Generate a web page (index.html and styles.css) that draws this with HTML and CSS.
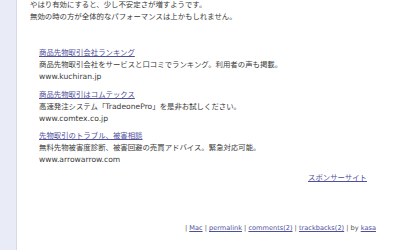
FILE: index.html
```html
<!DOCTYPE html>
<html lang="ja">
<head>
<meta charset="utf-8">
<link rel="stylesheet" href="styles.css">
</head>
<body>
<div class="side"></div>
<main class="main">
  <p class="intro">やはり有効にすると、少し不安定さが増すようです。<br>無効の時の方が全体的なパフォーマンスは上かもしれません。</p>
  <div class="ads">
    <div class="ad">
      <a href="#" class="ad-title">商品先物取引会社ランキング</a>
      <div>商品先物取引会社をサービスと口コミでランキング。利用者の声も掲載。</div>
      <div class="lat">www.kuchiran.jp</div>
    </div>
    <div class="ad">
      <a href="#" class="ad-title">商品先物取引はコムテックス</a>
      <div>高速発注システム「<span class="lat">TradeonePro</span>」を是非お試しください。</div>
      <div class="lat">www.comtex.co.jp</div>
    </div>
    <div class="ad">
      <a href="#" class="ad-title">先物取引のトラブル、被害相談</a>
      <div>無料先物被害度診断、被害回避の売買アドバイス。緊急対応可能。</div>
      <div class="lat">www.arrowarrow.com</div>
    </div>
    <div class="sponsor"><a href="#">スポンサーサイト</a></div>
  </div>
  <div class="footer">| <a href="#">Mac</a> | <a href="#">permalink</a> | <a href="#">comments(2)</a> | <a href="#">trackbacks(2)</a> | by <a href="#">kasa</a></div>
</main>
</body>
</html>
```
FILE: styles.css
```css
html, body {
  margin: 0;
  height: 100%;
  background: #fff;
}
body {
  display: flex;
  font-family: "DejaVu Sans", "Noto Sans CJK JP", sans-serif;
  font-size: 7.4px;
  line-height: 12px;
  color: #3a3a3a;
  overflow: hidden;
}
.side {
  width: 16px;
  flex: none;
  background: #e9ebf6;
  border-right: 1px solid #d6dbeb;
}
.main {
  flex: 1;
  padding: 0 24px 0 13px;
}
.intro {
  margin: -1px 0 0;
}
.ads {
  margin: 24px 0 0 9px;
  display: flex;
  flex-direction: column;
}
.ad {
  display: flex;
  flex-direction: column;
  margin-bottom: 5.5px;
}
.lat {
  font-size: 7.6px;
}
a {
  color: #50509a;
  text-decoration: underline;
}
.ad-title {
  align-self: flex-start;
}
.sponsor {
  text-align: right;
  padding-right: 9px;
  margin-top: 0.5px;
}
.footer {
  margin-top: 38px;
  text-align: right;
  color: #555;
  font-size: 6.6px;
}
```
